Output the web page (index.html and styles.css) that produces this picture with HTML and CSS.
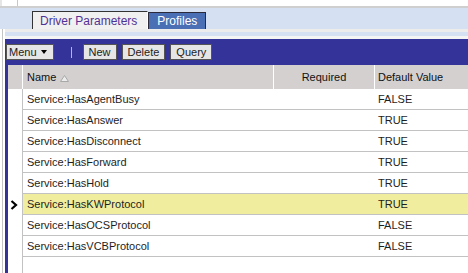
FILE: index.html
```html
<!DOCTYPE html>
<html>
<head>
<meta charset="utf-8">
<link rel="stylesheet" href="styles.css">
</head>
<body>
<div class="top"><div class="topcell"></div></div>
<div class="tabbar">
  <div class="tab active">Driver Parameters</div>
  <div class="tab other">Profiles</div>
</div>
<div class="panel">
  <div class="s1"></div>
  <div class="s2"></div>
  <div class="s3"></div>
  <div class="toolbar">
    <button class="btn menu">Menu<span class="caret"></span></button>
    <span class="sep"></span>
    <button class="btn">New</button>
    <button class="btn">Delete</button>
    <button class="btn">Query</button>
  </div>
  <div class="grid">
    <table>
      <colgroup><col class="c-ind"><col class="c-name"><col class="c-req"><col></colgroup>
      <thead>
        <tr>
          <th class="ind"></th>
          <th class="name">Name<svg class="sort" width="9" height="7" viewBox="0 0 9 7"><polygon points="0.5,6.5 4.5,0.5 8.5,6.5" fill="#ececec" stroke="#a8a8a8" stroke-width="1"/></svg></th>
          <th class="req">Required</th>
          <th class="def">Default Value</th>
        </tr>
      </thead>
      <tbody>
        <tr><td class="ind"></td><td class="name">Service:HasAgentBusy</td><td class="req"></td><td class="def">FALSE</td></tr>
        <tr><td class="ind"></td><td class="name">Service:HasAnswer</td><td class="req"></td><td class="def">TRUE</td></tr>
        <tr><td class="ind"></td><td class="name">Service:HasDisconnect</td><td class="req"></td><td class="def">TRUE</td></tr>
        <tr><td class="ind"></td><td class="name">Service:HasForward</td><td class="req"></td><td class="def">TRUE</td></tr>
        <tr><td class="ind"></td><td class="name">Service:HasHold</td><td class="req"></td><td class="def">TRUE</td></tr>
        <tr class="sel"><td class="ind"><svg class="ptr" width="8" height="10" viewBox="0 0 8 10"><polyline points="1.5,1 6,5 1.5,9" fill="none" stroke="#000" stroke-width="2.2"/></svg></td><td class="name">Service:HasKWProtocol</td><td class="req"></td><td class="def">TRUE</td></tr>
        <tr><td class="ind"></td><td class="name">Service:HasOCSProtocol</td><td class="req"></td><td class="def">FALSE</td></tr>
        <tr><td class="ind"></td><td class="name">Service:HasVCBProtocol</td><td class="req"></td><td class="def">FALSE</td></tr>
      </tbody>
    </table>
    <div class="filler"></div>
  </div>
</div>
</body>
</html>
```
FILE: styles.css
```css
html, body {
  margin: 0;
  padding: 0;
  background: #fff;
  overflow: hidden;
}
body {
  font-family: "Liberation Sans", Arial, sans-serif;
  font-size: 11px;
  color: #222;
}
.top {
  height: 6px;
  border-bottom: 2px solid #cfcfcf;
}
.topcell {
  width: 18px;
  height: 6px;
  box-sizing: border-box;
  border-left: 2px solid #e6e6e6;
  border-right: 1px solid #c8c8c8;
}
.tabbar {
  height: 21px;
  background: #d6e0f3;
  display: flex;
  align-items: flex-end;
  padding-left: 32px;
}
.tab {
  font-size: 12px;
  box-sizing: border-box;
  display: flex;
  align-items: center;
}
.tab.active {
  height: 18px;
  background: #f0f0f0;
  color: #503296;
  border-top: 1px solid #333;
  border-left: 1px solid #333;
  border-right: 1px solid #fff;
  padding: 0 10px 0 7px;
}
.tab.other {
  height: 17px;
  background: #4b6fb4;
  color: #fff;
  border: 1px solid #2a2a3a;
  border-bottom: none;
  padding: 0 8px 0 8px;
}
.panel {
  margin-left: 2px;
  border-left: 1px solid #c4c4c4;
  padding-left: 2px;
}
.s1 { height: 3px; background: #ececec; }
.s2 { height: 4px; background: #d6e0f3; }
.s3 { height: 3px; background: #f4f4f4; }
.toolbar {
  height: 26px;
  background: #333399;
  display: flex;
  align-items: center;
  padding-left: 1px;
}
.btn {
  font-family: "Liberation Sans", Arial, sans-serif;
  font-size: 11px;
  color: #222;
  height: 16px;
  box-sizing: border-box;
  margin: 0 5px 0 0;
  padding: 0 5px;
  background: #e6e6e6;
  border: 1px solid #555;
  border-radius: 0;
  display: flex;
  align-items: center;
  line-height: 14px;
}
.btn.menu {
  padding: 0 6px 0 2px;
  margin-right: 0;
}
.caret {
  display: inline-block;
  margin-left: 4px;
  width: 0;
  height: 0;
  border-left: 3.5px solid transparent;
  border-right: 3.5px solid transparent;
  border-top: 4px solid #000;
}
.sep {
  width: 1px;
  height: 11px;
  background: #b8b8c8;
  margin: 0 11px 0 17px;
}
.grid {
  border-left: 3px solid #333399;
  background: #fff;
}
table {
  width: 100%;
  border-collapse: separate;
  border-spacing: 0;
  table-layout: fixed;
}
col.c-ind { width: 14px; }
col.c-name { width: 251px; }
col.c-req { width: 101px; }
th {
  background: #d4d0d0;
  font-weight: normal;
  color: #111;
  height: 24px;
  line-height: 24px;
  padding: 0;
  text-align: left;
  white-space: nowrap;
}
th.name, th.req, th.def {
  border-left: 1px solid #fff;
}
th.name { padding-left: 4px; }
th.req { text-align: center; }
th.def { padding-left: 3px; }
.sort {
  margin-left: 4px;
  vertical-align: -1px;
}
td {
  line-height: 20px;
  padding: 0;
  white-space: nowrap;
  color: #1e1e1e;
}
td.name, td.req, td.def {
  border-bottom: 1px solid #c2c2c2;
}
td.name {
  border-left: 1px solid #c2c2c2;
  padding-left: 4px;
}
td.def { padding-left: 4px; }
td.ind {
  padding-left: 2px;
  vertical-align: middle;
}
.ptr { display: block; }
tr.sel td.name, tr.sel td.req, tr.sel td.def {
  background: #f0ee9e;
}
.filler {
  height: 24px;
  margin-left: 14px;
  border-left: 1px solid #c2c2c2;
}
```
